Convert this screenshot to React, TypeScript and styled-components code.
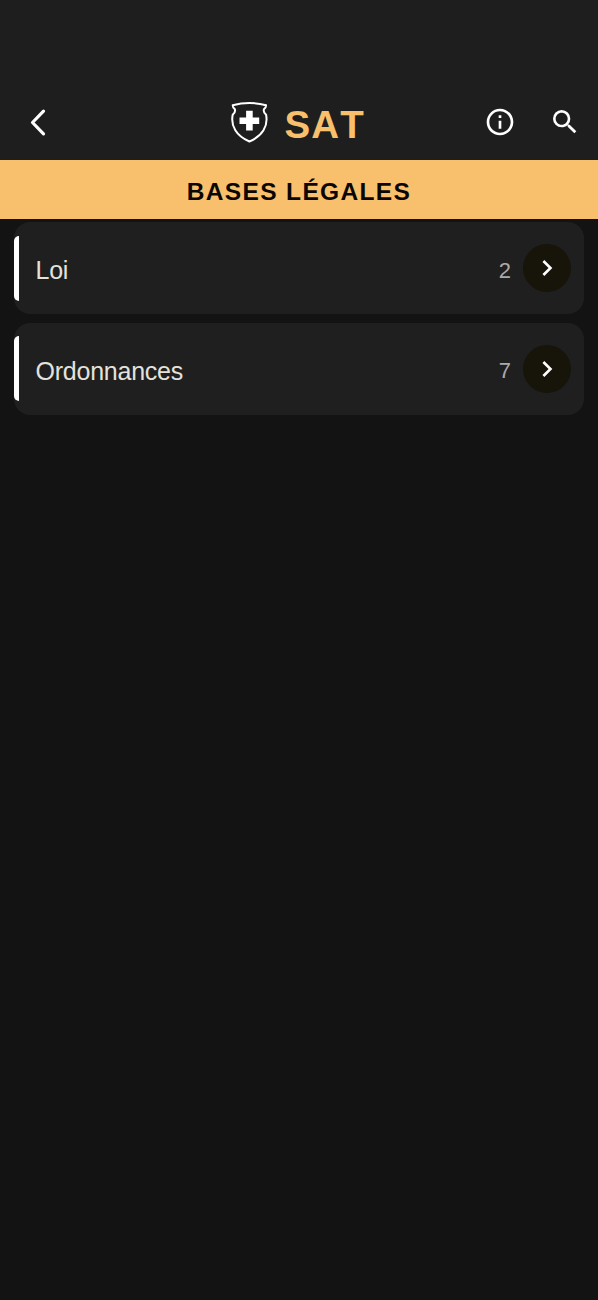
import React from 'react';
import styled, { createGlobalStyle } from 'styled-components';

const GlobalStyle = createGlobalStyle`
  * { box-sizing: border-box; }
  body {
    margin: 0;
    background: #131313;
    font-family: "Liberation Sans", Arial, sans-serif;
  }
`;

const Screen = styled.main`
  min-height: 1300px;
  background: #131313;
`;

const Header = styled.header`
  display: grid;
  grid-template-columns: 1fr auto 1fr;
  align-items: center;
  height: 160px;
  padding: 84px 17px 0 22px;
  background: #1e1e1e;
`;

const IconButton = styled.button`
  display: flex;
  width: 32px;
  height: 32px;
  padding: 0;
  border: 0;
  background: none;
  color: #fff;
`;

const Brand = styled.div`
  display: flex;
  align-items: center;
  gap: 10.5px;
  height: 48px;
  padding-right: 12px;
`;

const BrandName = styled.h1`
  margin: 6px 0 0;
  color: #f8c06c;
  font-size: 38.5px;
  line-height: 44px;
  letter-spacing: 1.2px;
  font-kerning: none;
`;

const Actions = styled.div`
  display: flex;
  justify-content: flex-end;
  gap: 33px;
`;

const Banner = styled.h2`
  display: flex;
  align-items: center;
  justify-content: center;
  height: 59px;
  margin: 0;
  padding: 4px 0 0;
  background: #f8c06c;
  color: #0a0702;
  font-size: 24.5px;
  letter-spacing: 1.35px;
  font-kerning: none;
`;

const List = styled.nav`
  display: flex;
  flex-direction: column;
  gap: 8.5px;
  padding: 3px 14px;
`;

const Card = styled.div`
  display: flex;
  align-items: center;
  height: 92px;
  padding-right: 13.5px;
  border-radius: 16px;
  background: #1f1f1f;
`;

const Accent = styled.span`
  width: 5px;
  height: 65px;
  border-radius: 5px 0 0 5px;
  background: #fff;
`;

const Label = styled.span`
  flex: 1;
  padding: 5px 0 0 16.5px;
  color: #e4e2dc;
  font-size: 25px;
  letter-spacing: -0.23px;
`;

const Count = styled.span`
  padding-top: 5px;
  margin-right: 11.5px;
  color: #aaa;
  font-size: 22px;
`;

const Circle = styled.span`
  display: flex;
  align-items: center;
  justify-content: center;
  width: 48px;
  height: 48px;
  border-radius: 50%;
  background: #17140a;
`;

const sections = [
  { label: 'Loi', count: 2 },
  { label: 'Ordonnances', count: 7 },
];

const BackIcon = () => (
  <svg width="32" height="32" viewBox="0 0 32 32" fill="none" stroke="currentColor" strokeWidth="3.2" strokeLinecap="round" strokeLinejoin="round">
    <path d="M21.5 5.200L10.500 16.500L21.500 27.800" />
  </svg>
);

const InfoIcon = () => (
  <svg width="32" height="32" viewBox="0 0 24 24" fill="currentColor">
    <path d="M11 7h2v2h-2zm0 4h2v6h-2zm1-9C6.48 2 2 6.48 2 12s4.48 10 10 10 10-4.480 10-10S17.520 2 12 2zm0 18c-4.410 0-8-3.590-8-8s3.590-8 8-8 8 3.590 8 8-3.590 8-8 8z" />
  </svg>
);

const SearchIcon = () => (
  <svg width="32" height="32" viewBox="0 0 24 24" fill="currentColor">
    <path d="M15.500 14h-.79l-.28-.27A6.471 6.471 0 0 0 16 9.500 6.500 6.500 0 1 0 9.500 16c1.610 0 3.090-.59 4.230-1.570l.27.28v.79l5 4.990L20.490 19l-4.990-5zm-6 0C7.010 14 5 11.990 5 9.500S7.010 5 9.500 5 14 7.010 14 9.500 11.990 14 9.500 14z" />
  </svg>
);

const ShieldIcon = () => (
  <svg width="48" height="48" viewBox="0 0 48 48" fill="none">
    <path d="M6.700 7.200Q23.400 2.800 40.100 7.200Q40 9.600 38.200 10.800Q36.600 13.600 40.100 16.800C42.300 28 36.500 38 23.400 43.500C10.300 38 4.500 28 6.700 16.800Q10.200 13.600 8.600 10.800Q6.800 9.600 6.700 7.200Z" stroke="#fff" strokeWidth="2" strokeLinejoin="round" />
    <path d="M20.100 12.800h6.600v6.600h6.500v6.600h-6.500v6.600h-6.600v-6.600h-6.600v-6.600h6.600z" fill="#fff" />
  </svg>
);

const ChevronIcon = () => (
  <svg width="32" height="32" viewBox="0 0 24 24" fill="currentColor" color="#fff">
    <path d="M10 6L8.590 7.410 13.170 12l-4.580 4.590L10 18l6-6z" />
  </svg>
);

export default function App() {
  return (
    <>
      <GlobalStyle />
      <Screen>
        <Header>
          <IconButton aria-label="Retour"><BackIcon /></IconButton>
          <Brand>
            <ShieldIcon />
            <BrandName>SAT</BrandName>
          </Brand>
          <Actions>
            <IconButton aria-label="Informations"><InfoIcon /></IconButton>
            <IconButton aria-label="Rechercher"><SearchIcon /></IconButton>
          </Actions>
        </Header>
        <Banner>BASES LÉGALES</Banner>
        <List>
          {sections.map(({ label, count }) => (
            <Card key={label}>
              <Accent />
              <Label>{label}</Label>
              <Count>{count}</Count>
              <Circle><ChevronIcon /></Circle>
            </Card>
          ))}
        </List>
      </Screen>
    </>
  );
}
